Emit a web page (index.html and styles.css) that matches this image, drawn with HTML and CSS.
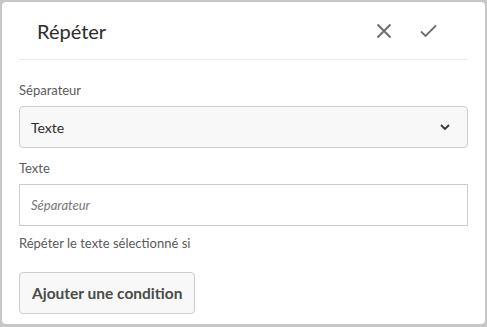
FILE: index.html
```html
<!DOCTYPE html>
<html lang="fr">
<head>
<meta charset="UTF-8" />
<title>Répéter</title>
<link rel="stylesheet" href="styles.css">
</head>
<body>
  <div class="panel">
    <div class="panel-header">
      <span class="panel-title">Répéter</span>
      <div class="header-actions">
        <button class="icon-btn" aria-label="Annuler">
          <svg viewBox="0 0 16 16" width="16" height="16"><path d="M1.5 1.5 L14.5 14.5 M14.5 1.5 L1.5 14.5" stroke="#6e6e6e" stroke-width="2" fill="none"/></svg>
        </button>
        <button class="icon-btn" aria-label="Valider">
          <svg viewBox="0 0 17 14" width="17" height="14"><path d="M1 7.5 L5.5 12 L16 1.5" stroke="#6e6e6e" stroke-width="1.8" fill="none"/></svg>
        </button>
      </div>
    </div>

    <div class="panel-body">
      <label class="field-label">Séparateur</label>
      <div class="select-box">
        <span>Texte</span>
        <svg viewBox="0 0 10 6" width="10" height="6"><path d="M1 1 L5 5 L9 1" stroke="#333" stroke-width="1.8" fill="none"/></svg>
      </div>

      <label class="field-label">Texte</label>
      <div class="text-input"><span class="placeholder">Séparateur</span></div>

      <p class="hint">Répéter le texte sélectionné si</p>

      <button class="add-btn">Ajouter une condition</button>
    </div>
  </div>
</body>
</html>
```

FILE: styles.css
```css
/* Base */
body {
  margin: 0;
  background: #c6c6c6;
  font-family: Lato, "Liberation Sans", sans-serif;
  color: #4b4b4b;
}

.panel {
  margin: 2px 2px 0 2px;
  height: 322px;
  background: #ffffff;
  border-radius: 4px;
  padding: 0 17px;
  box-sizing: border-box;
}

/* Header */
.panel-header {
  height: 57px;
  border-bottom: 1px solid #eaeaea;
  display: flex;
  align-items: center;
  padding: 0 31px 0 18px;
}
.panel-title {
  font-size: 20px;
  color: #2c2c2c;
  flex: 1;
}
.header-actions {
  display: flex;
  gap: 28px;
  align-items: center;
}
.icon-btn {
  border: 0;
  background: none;
  padding: 0;
  display: flex;
}

/* Form */
.panel-body {
  padding-top: 22px;
  display: flex;
  flex-direction: column;
  align-items: flex-start;
}
.field-label {
  font-size: 13px;
  color: #5a5a5a;
  line-height: 16px;
  margin-bottom: 8px;
}
.select-box {
  align-self: stretch;
  height: 42px;
  box-sizing: border-box;
  border: 1px solid #cdcdcd;
  border-radius: 4px;
  background: #f8f8f8;
  display: flex;
  align-items: center;
  justify-content: space-between;
  padding: 0 17px 0 11px;
  font-size: 14px;
  color: #2c2c2c;
  margin-bottom: 12px;
}
.text-input {
  align-self: stretch;
  height: 42px;
  box-sizing: border-box;
  border: 1px solid #cdcdcd;
  background: #fff;
  display: flex;
  align-items: center;
  padding: 0 11px;
}
.placeholder {
  font-size: 13px;
  font-style: italic;
  color: #777;
}
.hint {
  font-size: 13px;
  color: #5a5a5a;
  margin: 9px 0 0;
  line-height: 16px;
}
.add-btn {
  margin-top: 21px;
  height: 42px;
  padding: 0 12px;
  border: 1px solid #cdcdcd;
  border-radius: 4px;
  background: #f8f8f8;
  font-family: inherit;
  font-size: 15.5px;
  font-weight: 700;
  color: #4b4b4b;
}
```
